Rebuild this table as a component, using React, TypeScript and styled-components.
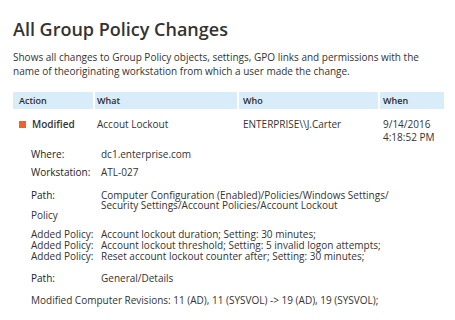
import React from "react";
import styled, { createGlobalStyle } from "styled-components";

const Global = createGlobalStyle`
  html, body { margin: 0; padding: 0; background: #ffffff; }
  body {
    font-family: "Open Sans", "Liberation Sans", sans-serif;
    color: #333333;
    width: 455px;
    height: 320px;
    overflow: hidden;
  }
`;

const Page = styled.div`
  padding: 17px 10px 0 13px;
`;

const Title = styled.h1`
  margin: 0;
  font-size: 18px;
  line-height: 24px;
  font-weight: 600;
  color: #333333;
`;

const Description = styled.p`
  margin: 9px 0 0;
  font-size: 10px;
  line-height: 14px;
  color: #333333;
`;

const COLS = "80px 142px 139px 64px";
const PADS = [6, 2, 4, 3];

const Table = styled.div`
  margin-top: 14px;
  width: 432px;
`;

const HeaderRow = styled.div`
  display: grid;
  grid-template-columns: ${COLS};
  column-gap: 2px;
`;

const HeaderCell = styled.div<{ $pad: number }>`
  background: #d8edf9;
  height: 17px;
  padding-left: ${(p) => p.$pad}px;
  font-size: 9px;
  font-weight: 600;
  line-height: 17px;
  color: #2b2b2b;
`;

const DataRow = styled.div`
  display: grid;
  grid-template-columns: ${COLS};
  column-gap: 2px;
  padding-top: 9px;
  font-size: 10px;
  line-height: 13px;
`;

const Cell = styled.div<{ $pad: number }>`
  padding-left: ${(p) => p.$pad}px;
`;

const ActionCell = styled(Cell)`
  display: flex;
  align-items: center;
  align-self: start;
  gap: 6px;
  font-weight: 600;
`;

const Marker = styled.span`
  width: 7px;
  height: 7px;
  background: #ec6332;
  flex: none;
`;

const Details = styled.div`
  margin-top: 5px;
  padding-left: 18px;
  font-size: 10px;
  line-height: 11px;
`;

const Field = styled.div<{ $gap: number; $tight?: boolean }>`
  display: grid;
  grid-template-columns: 70px 1fr;
  margin-top: ${(p) => p.$gap}px;
  line-height: ${(p) => (p.$tight ? 10 : 11)}px;
`;

const Label = styled.div<{ $strong?: boolean }>`
  font-weight: ${(p) => (p.$strong ? 500 : 400)};
  color: ${(p) => (p.$strong ? "#222222" : "#333333")};
`;

const Value = styled.div``;

const Line = styled.div<{ $gap: number }>`
  margin-top: ${(p) => p.$gap}px;
`;

const headers = ["Action", "What", "Who", "When"];

export default function App() {
  return (
    <>
      <Global />
      <Page>
        <Title>All Group Policy Changes</Title>
        <Description>
          Shows all changes to Group Policy objects, settings, GPO links and permissions with the
          <br />
          name of theoriginating workstation from which a user made the change.
        </Description>
        <Table>
          <HeaderRow>
            {headers.map((h, i) => (
              <HeaderCell key={h} $pad={PADS[i]}>
                {h}
              </HeaderCell>
            ))}
          </HeaderRow>
          <DataRow>
            <ActionCell $pad={PADS[0]}>
              <Marker />
              Modified
            </ActionCell>
            <Cell $pad={PADS[1]}>Accout Lockout</Cell>
            <Cell $pad={PADS[2]}>ENTERPRISE\\J.Carter</Cell>
            <Cell $pad={PADS[3]}>
              9/14/2016
              <br />
              4:18:52 PM
            </Cell>
          </DataRow>
        </Table>
        <Details>
          <Field $gap={0}>
            <Label $strong>Where:</Label>
            <Value>dc1.enterprise.com</Value>
          </Field>
          <Field $gap={7}>
            <Label $strong>Workstation:</Label>
            <Value>ATL-027</Value>
          </Field>
          <Field $gap={12} $tight>
            <Label $strong>Path:</Label>
            <Value>
              Computer Configuration (Enabled)/Policies/Windows Settings/
              <br />
              Security Settings/Account Policies/Account Lockout
            </Value>
          </Field>
          <Line $gap={0}>Policy</Line>
          <Field $gap={8}>
            <Label>Added Policy:</Label>
            <Value>Account lockout duration; Setting: 30 minutes;</Value>
          </Field>
          <Field $gap={0}>
            <Label>Added Policy:</Label>
            <Value>Account lockout threshold; Setting: 5 invalid logon attempts;</Value>
          </Field>
          <Field $gap={0}>
            <Label>Added Policy:</Label>
            <Value>Reset account lockout counter after; Setting: 30 minutes;</Value>
          </Field>
          <Field $gap={11}>
            <Label $strong>Path:</Label>
            <Value>General/Details</Value>
          </Field>
          <Line $gap={11}>
            Modified Computer Revisions: 11 (AD), 11 (SYSVOL) -&gt; 19 (AD), 19 (SYSVOL);
          </Line>
        </Details>
      </Page>
    </>
  );
}
